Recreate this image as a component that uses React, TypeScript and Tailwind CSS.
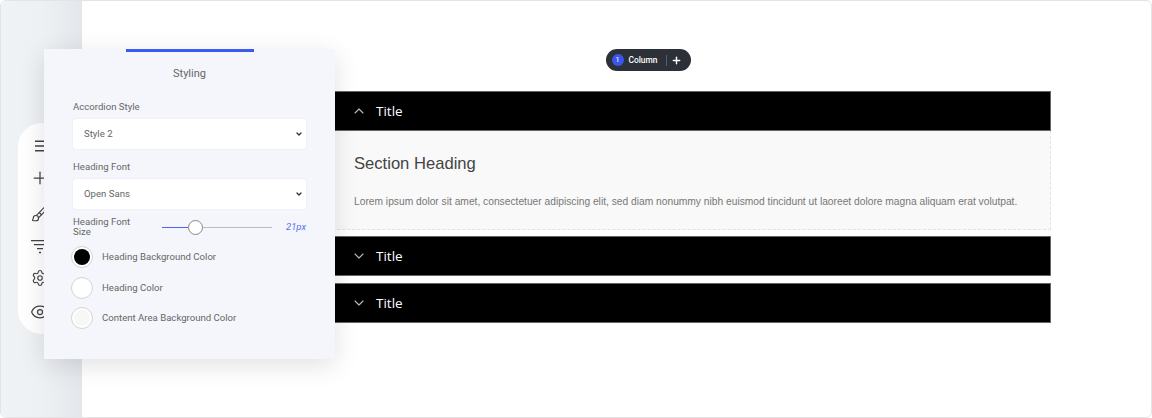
import { Brush, ChevronDown, ChevronUp, Eye, Plus, Settings } from 'lucide-react'

function MenuIcon() {
  return (
    <svg width="20" height="20" viewBox="0 0 20 20" fill="none" stroke="currentColor" strokeWidth="1.5">
      <path d="M5 5.2h10M5 10h10M5 14.8h10" />
    </svg>
  )
}

function FilterIcon() {
  return (
    <svg width="20" height="20" viewBox="0 0 20 20" fill="none" stroke="currentColor" strokeWidth="1.3">
      <path d="M1 4.7h18M4 8.7h12M7 12.7h6M9 16.5h2" />
    </svg>
  )
}

function AccordionHeader({ title, open }: { title: string; open?: boolean }) {
  return (
    <div className="flex h-10 items-center border border-[#666] bg-black pl-[168px] text-white">
      {open ? (
        <ChevronUp className="h-4 w-4 text-[#bbb]" strokeWidth={1.6} />
      ) : (
        <ChevronDown className="h-4 w-4 text-[#bbb]" strokeWidth={1.6} />
      )}
      <span className="ml-[9px] font-['Open_Sans',sans-serif] text-[13.5px]">{title}</span>
    </div>
  )
}

function ColorRow({ label, swatch }: { label: string; swatch: string }) {
  return (
    <div className="-ml-[2px] flex h-[30.6px] items-center gap-[9px]">
      <div className="flex h-[22px] w-[22px] items-center justify-center rounded-full border border-[#d4d4d4] bg-white">
        <div className={`h-4 w-4 rounded-full ${swatch}`} />
      </div>
      <span className="text-[9.6px] text-[#666]">{label}</span>
    </div>
  )
}

function Field({ label, value }: { label: string; value: string }) {
  return (
    <div className="mb-[11px]">
      <label className="mb-[5px] block text-[9.6px] leading-[14px] text-[#666]">{label}</label>
      <div className="relative">
        <select
          defaultValue={value}
          className="h-[30px] w-full appearance-none rounded-[2px] bg-white pl-[11px] text-[9.6px] text-[#666] shadow-[0_0_1px_rgba(0,0,0,0.2)]"
        >
          <option>{value}</option>
        </select>
        <ChevronDown className="pointer-events-none absolute top-[11px] right-[3px] h-2 w-2 text-[#333]" strokeWidth={4} />
      </div>
    </div>
  )
}

export default function App() {
  return (
    <div className="relative h-[418px] w-[1152px] overflow-hidden bg-white font-['Roboto',sans-serif]">
      <div className="flex h-full overflow-hidden rounded-[6px] border border-[#e4e4e4]">
        {/* Sidebar */}
        <div className="w-[81px] shrink-0 bg-gradient-to-r from-[#f0f3f6] via-[#eef1f4] to-[#e3e7eb]" />

        {/* Canvas */}
        <main className="flex-1 pr-[100px] pl-[100px] pt-[48px]">
          <div className="flex justify-center pl-[64px]">
            <div className="flex h-[22px] items-center rounded-full bg-[#2c3038] pl-[6px] pr-[9px] text-white">
              <span className="flex h-3 w-3 items-center justify-center rounded-full bg-[#3b54ec] text-[8px]">1</span>
              <span className="ml-[5px] text-[8.4px] font-medium">Column</span>
              <span className="mr-[4px] ml-[9px] h-[11px] w-px bg-[#5a5e66]" />
              <Plus className="h-[11px] w-[11px]" strokeWidth={3} />
            </div>
          </div>

          <div className="mt-[20px]">
            <AccordionHeader title="Title" open />
            <div className="h-[99px] border-r border-b border-dashed border-[#e2e2e2] bg-[#f9f9f9] pl-[172px] pt-[22px] font-['Liberation_Sans',sans-serif]">
              <h2 className="text-[16.6px] leading-[22px] text-[#444]">Section Heading</h2>
              <p className="mt-[19px] text-[10.24px] text-[#777]">
                Lorem ipsum dolor sit amet, consectetuer adipiscing elit, sed diam nonummy nibh euismod tincidunt ut laoreet dolore magna aliquam erat volutpat.
              </p>
            </div>
            <div className="mt-[6px]">
              <AccordionHeader title="Title" />
            </div>
            <div className="mt-[7px]">
              <AccordionHeader title="Title" />
            </div>
          </div>
        </main>
      </div>

      {/* Tool rail, mostly under the panel */}
      <div className="absolute top-[123px] left-[18px] flex h-[211px] w-[50px] flex-col items-center rounded-l-[24px] bg-white pt-[13px] pr-[7px] text-[#444]">
        <MenuIcon />
        <Plus className="mt-[12px] h-[20px] w-[20px]" strokeWidth={1.5} />
        <Brush className="mt-[17px] h-[18px] w-[18px]" strokeWidth={1.5} />
        <div className="mt-[13px]">
          <FilterIcon />
        </div>
        <Settings className="mt-[13px] h-[18px] w-[18px]" strokeWidth={1.5} />
        <Eye className="mt-[15px] h-[20px] w-[20px]" strokeWidth={1.5} />
      </div>

      {/* Styling panel */}
      <div className="absolute top-[49px] left-[44px] h-[310px] w-[291px] bg-[#f4f6fb] px-[29px] shadow-[0_6px_24px_rgba(0,0,0,0.12)]">
        <div className="absolute top-0 left-[82px] h-[3px] w-[128px] bg-[#3b5bf0]" />
        <div className="pt-[18px] text-center text-[11px] leading-[14px] text-[#666]">Styling</div>
        <div className="mt-[19px]">
          <Field label="Accordion Style" value="Style 2" />
          <Field label="Heading Font" value="Open Sans" />
        </div>
        <div className="-mt-[3px] flex items-center">
          <span className="w-[89px] pr-[20px] text-[9.6px] leading-[10px] text-[#666]">Heading Font Size</span>
          <div className="relative flex h-4 w-[110px] items-center">
            <div className="h-px w-[26px] bg-[#4a66f0]" />
            <div className="h-px flex-1 bg-[#b9bcc4]" />
            <div className="absolute left-[26px] h-[15px] w-[15px] rounded-full border border-[#888] bg-white" />
          </div>
          <span className="ml-auto text-[9.5px] italic text-[#5a72f0]">21px</span>
        </div>
        <div className="mt-[5px]">
          <ColorRow label="Heading Background Color" swatch="bg-black" />
          <ColorRow label="Heading Color" swatch="bg-white" />
          <ColorRow label="Content Area Background Color" swatch="bg-[#f7f7f7]" />
        </div>
      </div>
    </div>
  )
}
